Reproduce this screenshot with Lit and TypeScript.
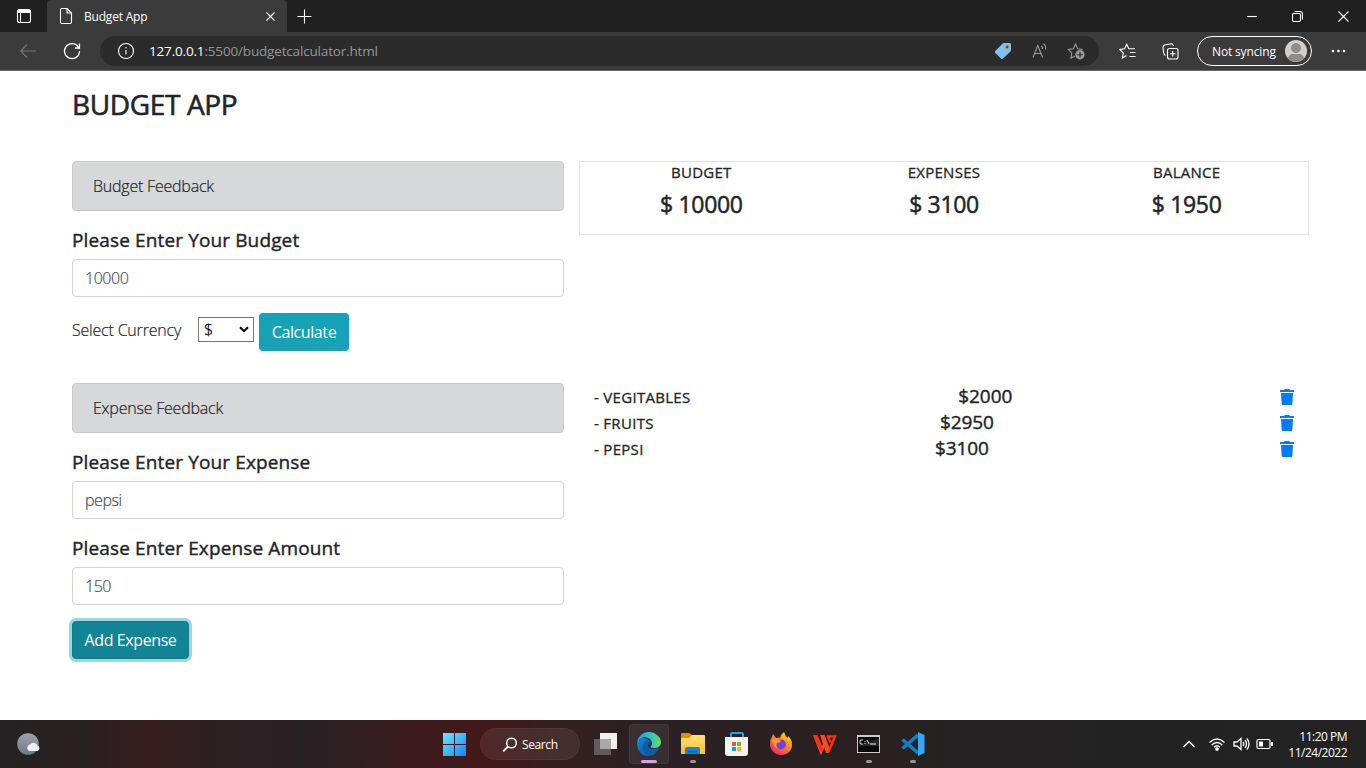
import { LitElement, html, css, svg } from "lit";
import { customElement, property } from "lit/decorators.js";

const trash = html`<svg class="trash" width="14" height="16" viewBox="0 0 14 16"><path fill="#007bff" d="M0 1h4l.8-1h4.4L10 1h4v2H0zM1 4h12l-.7 11a1.2 1.2 0 0 1-1.2 1H2.9a1.2 1.2 0 0 1-1.2-1z"/></svg>`;

@customElement("browser-chrome")
class BrowserChrome extends LitElement {
  static styles = css`
    :host { display: block; font-family: "Open Sans", sans-serif; color: #fff; }
    svg { display: block; flex: none; fill: none; stroke: #fff; stroke-width: 1.1; }
    .tabs { height: 32px; background: #202020; display: flex; align-items: center; }
    .menu { width: 47px; padding-left: 16px; box-sizing: border-box; }
    .tab { width: 240px; height: 32px; box-sizing: border-box; background: #3b3b3b; border-radius: 4px 4px 0 0; display: flex; align-items: center; padding: 0 12px 0 12px; }
    .name { font-size: 12px; margin-left: 11px; flex: 1; letter-spacing: -0.2px; }
    .plus { margin-left: 10px; }
    .win { margin-left: auto; display: flex; align-items: center; gap: 35px; padding-right: 17.5px; }
    .bar { height: 39px; box-sizing: border-box; background: #3b3b3b; border-bottom: 1px solid #6b6666; display: flex; align-items: center; padding-left: 20px; }
    .back { stroke: #777; }
    .reload { margin-left: 27px; stroke-width: 1.3; }
    .address { width: 999px; height: 30px; margin-left: 19px; border-radius: 15px; background: #2b2b2b; display: flex; align-items: center; padding: 0 13px 0 17px; box-sizing: border-box; }
    .url { margin-left: 14px; flex: 1; font-size: 13.5px; color: #969696; letter-spacing: -0.17px; }
    .host { color: #fff; }
    .tag { margin-right: 20px; stroke: none; }
    .read { margin-right: 19px; }
    .grey { stroke: #999; }
    .fav { margin-left: 20px; }
    .coll { margin-left: 26px; }
    .profile { margin-left: 18px; width: 115px; height: 30px; box-sizing: border-box; border: 1px solid #fff; border-radius: 15px; display: flex; align-items: center; justify-content: space-between; padding: 0 3px 0 14px; font-size: 12px; letter-spacing: -0.15px; white-space: nowrap; }
    .avatar { stroke: none; }
    .dots { margin-left: 19px; stroke: none; fill: #fff; }
  `;
  render() {
    return html`
      <div class="tabs">
        <div class="menu"><svg width="16" height="16" viewBox="0 0 16 16"><rect x="1.5" y="1.5" width="13" height="13" rx="2"/><path d="M1.5 2.5h13v2h-13z" fill="#fff"/><path d="M4.5 4v10.5"/></svg></div>
        <div class="tab">
          <svg width="14" height="16" viewBox="0 0 14 16"><path d="M1.5 2q0-1.5 1.5-1.5h5L12.5 5v9q0 1.500-1.500 1.500H3Q1.500 15.500 1.500 14zM8 .5V5h4.500"/></svg>
          <span class="name">Budget App</span>
          <svg width="9" height="9" viewBox="0 0 9 9"><path d="m.5.5 8 8m0-8-8 8"/></svg>
        </div>
        <svg class="plus" width="15" height="15" viewBox="0 0 15 15"><path d="M7.500.5v14M.5 7.500h14"/></svg>
        <div class="win">
          <svg width="10" height="10" viewBox="0 0 10 10"><path d="M0 5.500h10"/></svg>
          <svg width="11" height="11" viewBox="0 0 11 11"><rect x=".5" y="2.500" width="8" height="8" rx="1.500"/><path d="M2.500.5H8q2.500 0 2.500 2.500v5.500"/></svg>
          <svg width="11" height="11" viewBox="0 0 11 11"><path d="m.5.5 10 10m0-10-10 10"/></svg>
        </div>
      </div>
      <div class="bar">
        <svg class="back" width="16" height="14" viewBox="0 0 16 14"><path d="M7 .5.8 7 7 13.500M.8 7H16"/></svg>
        <svg class="reload" width="18" height="18" viewBox="0 0 18 18"><path d="M16.200 7A7.500 7.500 0 1 0 16.500 9M16.500 1.500V6h-4.500"/></svg>
        <div class="address">
          <svg width="18" height="18" viewBox="0 0 18 18"><circle cx="9" cy="9" r="7.500"/><path d="M9 8v4.500M9 5v1.500"/></svg>
          <span class="url"><span class="host">127.0.0.1</span>:5500/budgetcalculator.html</span>
          <svg class="tag" width="18" height="18" viewBox="0 0 18 18"><path fill="#82bfee" d="M10 1h5.500q1.500 0 1.500 1.500V8q0 1-.8 1.800L9 16.500q-1 1-2 0L1.200 11q-1-1 0-2L8.500 1.800Q9 1 10 1z"/><circle cx="13.200" cy="5" r="2" fill="#b98b12"/><circle cx="13.200" cy="5" r="1" fill="#4d3a08"/></svg>
          <svg class="read grey" width="16" height="16" viewBox="0 0 16 16"><path d="m1 14.500 4.800-12 4.800 12M2.700 10.500H9M9.500 3q1.200 1.200 1 3M11.500.8Q14.300 3 13.500 6.500"/></svg>
          <svg class="grey" width="19" height="18" viewBox="0 0 19 18"><path d="M8 14 4 16l.8-4.800L1.300 7.500l5-.8L8.500 2l2.200 4.700 5 .8"/><circle cx="13" cy="12.800" r="4.700" fill="#999" stroke="none"/><path d="M13 10v5.500m-2.800-2.700h5.600" stroke="#2b2b2b"/></svg>
        </div>
        <svg class="fav" width="17" height="16" viewBox="0 0 17 16"><path d="m7.500 12.500-4 2.500.8-5L.8 6.500l4.800-.7L7.700 1.300l2.100 4.400H16M11 9.500h5.500M10.500 13.500h6"/></svg>
        <svg class="coll" width="17" height="17" viewBox="0 0 17 17"><rect x="5.500" y="5.500" width="10.500" height="10.500" rx="2"/><path d="M10.750 8v5.500M8 10.750h5.500M3.500 12.500Q2 12 1.500 9L1 4.500Q1 2.500 2.500 2L9 .8q2 0 2.500 2"/></svg>
        <div class="profile"><span>Not syncing</span><svg class="avatar" width="24" height="24" viewBox="0 0 24 24"><circle cx="12" cy="12" r="11" fill="#d2cfcc"/><circle cx="12" cy="9" r="5" fill="#918c88"/><path d="M4 19.500Q5 15 8 15h8q3 0 4 4.500-8 7-16 0z" fill="#918c88"/></svg></div>
        <svg class="dots" width="15" height="4" viewBox="0 0 15 4"><circle cx="2" cy="2" r="1.300"/><circle cx="7.500" cy="2" r="1.300"/><circle cx="13" cy="2" r="1.300"/></svg>
      </div>`;
  }
}

@customElement("budget-page")
class BudgetPage extends LitElement {
  @property({ attribute: false }) expenses = [["- VEGITABLES", "$2000"], ["- FRUITS", "$2950"], ["- PEPSI", "$3100"]];
  static styles = css`
    :host { display: block; height: 649px; background: #fff; color: #212529; font: 300 16px/24px "Open Sans", sans-serif; -webkit-text-stroke: 0.2px; padding: 16px 57px 0 72px; box-sizing: border-box; }
    h1, h5 { margin: 0; font-weight: 400; white-space: nowrap; -webkit-text-stroke: 0.4px; }
    h1 { font-size: 28px; line-height: 34px; letter-spacing: -0.35px; -webkit-text-stroke: 0.6px; }
    .grid { margin-top: 40px; display: grid; grid-template-columns: 492px 730px; column-gap: 15px; row-gap: 32px; align-items: start; }
    .alert { height: 50px; box-sizing: border-box; border: 1px solid #c6c8ca; border-radius: 4px; background: #d6d8d9; padding: 12px 20px; letter-spacing: -0.22px; }
    h5 { font-size: 19px; line-height: 24px; margin: 17px 0 7px; letter-spacing: 0.13px; }
    .input { height: 38px; border: 1px solid #ced4da; border-radius: 4px; box-sizing: border-box; padding: 6px 12px; color: #495057; letter-spacing: -0.45px; }
    .currency { display: flex; margin-top: 16px; height: 38px; }
    .label { width: 126px; padding-top: 5px; letter-spacing: -0.2px; }
    .select { width: 56px; height: 25px; margin-top: 4px; box-sizing: border-box; border: 1px solid #767676; background: #fff; color: #000; display: flex; align-items: center; justify-content: space-between; padding: 0 4px 0 5px; -webkit-text-stroke: 0.3px; }
    .btn { width: 90px; height: 38px; margin-left: 5px; box-sizing: border-box; border-radius: 4px; background: #17a2b8; color: #fff; font-weight: 400; line-height: 38px; text-align: center; letter-spacing: -0.4px; -webkit-text-stroke: 0; }
    .focus { width: 117px; margin: 16px 0 0; background: #138496; border: 1px solid #117a8b; line-height: 36px; box-shadow: 0 0 0 3px rgba(58, 176, 195, .5); }
    .stats { height: 74px; box-sizing: border-box; border: 1px solid #dee2e6; display: grid; grid-template-columns: repeat(3, 1fr); text-align: center; font-weight: 400; -webkit-text-stroke: 0.3px; }
    .cap { font-size: 15px; line-height: 20px; letter-spacing: 0.25px; }
    .value { font-size: 23px; line-height: 29px; margin-top: 8px; letter-spacing: -0.35px; -webkit-text-stroke: 0.5px; }
    .list { padding: 0 15px; }
    .row { height: 26px; display: flex; justify-content: space-between; align-items: center; font-weight: 400; -webkit-text-stroke: 0.3px; }
    .item { font-size: 15px; padding-top: 2px; letter-spacing: 0.3px; }
    .amount { font-size: 19px; letter-spacing: -0.1px; -webkit-text-stroke: 0.4px; }
    .trash { margin-top: 2px; }
  `;
  render() {
    const stat = (a: string, b: string) => html`<div><div class="cap">${a}</div><div class="value">${b}</div></div>`;
    return html`
      <h1>BUDGET APP</h1>
      <div class="grid">
        <div>
          <div class="alert">Budget Feedback</div>
          <h5>Please Enter Your Budget</h5>
          <div class="input">10000</div>
          <div class="currency">
            <span class="label">Select Currency</span>
            <span class="select">$<svg width="10" height="7" viewBox="0 0 10 7"><path d="m1 1.200 4 4 4-4" fill="none" stroke="#000" stroke-width="2"/></svg></span>
            <span class="btn">Calculate</span>
          </div>
        </div>
        <div class="stats">${stat("BUDGET", "$ 10000")}${stat("EXPENSES", "$ 3100")}${stat("BALANCE", "$ 1950")}</div>
        <div>
          <div class="alert">Expense Feedback</div>
          <h5>Please Enter Your Expense</h5>
          <div class="input">pepsi</div>
          <h5>Please Enter Expense Amount</h5>
          <div class="input">150</div>
          <div class="btn focus">Add Expense</div>
        </div>
        <div class="list">${this.expenses.map(([n, a]) => html`<div class="row"><span class="item">${n}</span><span class="amount">${a}</span>${trash}</div>`)}</div>
      </div>`;
  }
}

@customElement("task-bar")
class TaskBar extends LitElement {
  static styles = css`
    :host { display: flex; height: 48px; box-sizing: border-box; align-items: center; color: #fff; font: 12px/16px "Open Sans", sans-serif; padding: 0 19px 0 16px;
      background: linear-gradient(90deg, #242222 0, #2a2021 90px, #381d1f 155px, #2d2023 200px, #2a2125 320px, #3a1c1f 400px, #441819 480px, #36201f 560px, #2b2023 640px, #2a2022 860px, #242222 960px, #232323 100%); }
    svg { display: block; }
    .apps { display: flex; align-items: center; margin-left: 401px; }
    .start { margin-right: 14px; }
    .search { width: 100px; height: 32px; border-radius: 16px; background: rgba(255,255,255,.07); box-shadow: inset 0 0 0 1px rgba(255,255,255,.04); display: flex; align-items: center; box-sizing: border-box; padding: 1px 0 0 22px; gap: 4px; letter-spacing: -0.4px; margin-right: 3px; }
    .app { width: 40px; height: 40px; margin: 0 2px; display: flex; flex-direction: column; align-items: center; border-radius: 4px; padding-top: 8px; box-sizing: border-box; }
    .active { background: rgba(255,255,255,.07); box-shadow: inset 0 0 0 1px rgba(255,255,255,.05); }
    .dot { width: 6px; height: 3px; border-radius: 2px; background: #9b9596; margin-top: 4px; }
    .active .dot { width: 16px; background: #dd9ce5; }
    .tray { margin-left: auto; display: flex; align-items: center; }
    .line { fill: none; stroke: #fff; stroke-width: 1.3; }
    .wifi { margin-left: 12px; }
    .sound { margin-left: 7px; }
    .battery { margin-left: 5px; }
    .clock { width: 64px; text-align: right; margin-left: 9px; padding-top: 1px; letter-spacing: -0.5px; white-space: nowrap; }
  `;
  render() {
    const app = (g: unknown, dot = false, active = false) => html`<div class="app ${active ? "active" : ""}"><svg width="24" height="24" viewBox="0 0 24 24">${g}</svg>${dot ? html`<i class="dot"></i>` : ""}</div>`;
    return html`
      <svg width="25" height="24" viewBox="0 0 25 24"><defs><linearGradient id="moon" x2="0" y2="1"><stop stop-color="#9ba4b0"/><stop offset="1" stop-color="#6e7884"/></linearGradient></defs><circle cx="12" cy="12" r="10.800" fill="url(#moon)"/><path fill="#edf0f4" d="M14 19a3.300 3.300 0 0 1 .2-6.500 4 4 0 0 1 7 .8A2.900 2.900 0 0 1 21 19z"/></svg>
      <div class="apps">
        <svg class="start" width="24" height="24" viewBox="0 0 24 24"><defs><linearGradient id="win" x2="1" y2="1"><stop stop-color="#70e6ff"/><stop offset="1" stop-color="#078df8"/></linearGradient></defs><path fill="url(#win)" d="M1 1h11v11H1zM13 1h11v11H13zM1 13h11v11H1zM13 13h11v11H13z"/></svg>
        <div class="search"><svg width="16" height="16" viewBox="0 0 16 16"><circle cx="9.500" cy="6" r="4.800" fill="none" stroke="#fff" stroke-width="1.500"/><path d="m6 9.500-4.800 4.800" stroke="#fff" stroke-width="1.800"/></svg>Search</div>
        ${app(svg`<path d="M7 1h17v16H7z" fill="#f1f1f1"/><path d="M1 7h17v16H1z" fill="#5e5c5d"/><path d="M7 7h11v10H7z" fill="#a9a8a8"/>`)}
        ${app(svg`<defs><linearGradient id="e1"><stop stop-color="#239ed6"/><stop offset=".6" stop-color="#35c7c5"/><stop offset="1" stop-color="#69e24c"/></linearGradient><linearGradient id="e2" x2="1" y2="1"><stop stop-color="#1688d4"/><stop offset="1" stop-color="#0b4d99"/></linearGradient></defs><path fill="url(#e2)" d="M0 11C1 4 8 5 13 9c-5 1-4 7 1 8 3 1 6 0 8-1-2 5-6 8-11 8C4 24 0 18 0 11z"/><path fill="#0b5cab" d="M7 11c2-4 6-3 7-1-5 2-3 7 1 7 3 0 5 0 7-1-3 6-7 8-11 7-5-2-7-8-4-12z"/><path fill="url(#e1)" d="M0 11C1 4 6 0 12 0s12 5 12 10c0 4-3 6-7 6-3 0-4-1-3-2 2-2 1-5-1-7C9 4 2 5 0 11z"/>`, true, true)}
        ${app(svg`<defs><linearGradient id="fo" x2="0" y2="1"><stop stop-color="#ffe078"/><stop offset="1" stop-color="#ffc12b"/></linearGradient></defs><path fill="#d99010" d="M0 2q0-1 1-1h7q1 0 3 2h6v6H0z"/><path fill="url(#fo)" d="M0 6h8l3-3h12q1 0 1 1v18H0z"/><path fill="#1685d5" d="M4 22v-5q0-2 2-2h11q2 0 2 2v5z"/><path fill="#0c61a8" d="M7 19h9v1.500H7z"/>`, true)}
        ${app(svg`<path d="M6 6V2q0-1 1-1h10q1 0 1 1v4" fill="none" stroke="#20a2e3" stroke-width="2"/><path fill="#f1f3f5" d="M0 5h23v16q0 3-3 3H3q-3 0-3-3z"/><path fill="#f25022" d="M7 10h4v4H7z"/><path fill="#7fba00" d="M12 10h4v4h-4z"/><path fill="#00a4ef" d="M7 15h4v4H7z"/><path fill="#ffb900" d="M12 15h4v4h-4z"/>`)}
        ${app(svg`<defs><linearGradient id="ff" x1="1" x2=".2" y2="1"><stop stop-color="#fff04a"/><stop offset=".45" stop-color="#ff8c22"/><stop offset="1" stop-color="#f4216b"/></linearGradient></defs><path fill="url(#ff)" d="M1 12Q1 7 3 5l1-3 3 4q3-1 4 0 1-4 4-6 1 4 4 6V4q4 3 4 9c0 6-5 10-11 10S1 18 1 12z"/><circle cx="12" cy="12.500" r="5" fill="#7541d7"/><path fill="#ff962d" d="M2 8q6-3 10 1-1 2-4 2-2 4 2 6-5-1-6-6z"/>`)}
        ${app(svg`<path d="M1.500 3.500 8 20l3.500-8" fill="none" stroke="#ff5a20" stroke-width="2.500"/><path d="M0 3h4.500l6 14-2.500 4z" fill="#ff2e1e"/><path d="M7 3h4.500L17 17l-1.500 4H13z" fill="#ff4a20"/><path d="m15.500 20 6.500-15.500h-7l2.500 6" fill="none" stroke="#f5301c" stroke-width="2.500"/>`)}
        ${app(svg`<path fill="#c9cccf" d="M0 3h23v18H0z"/><path fill="#090909" d="M1 5h21v15H1z"/><path fill="#333" d="M1 14 22 6v8z" opacity=".7"/><path d="M6 8H4q-1 0-1 1v2q0 1 1 1h2M8 9v1m0 1v1M10 8l2 4m1 0h6" fill="none" stroke="#eee"/>`, true)}
        ${app(svg`<path d="M1.500 7.500 17 21M1.500 16.500 17 3" stroke="#117fc8" stroke-width="3.500"/><path fill="#35a7f4" d="m17 0 6.500 3v18L17 24z"/>`, true)}
      </div>
      <div class="tray">
        <svg class="line" width="14" height="16" viewBox="0 0 14 16"><path d="m1.500 11 5.500-5.500 5.500 5.500"/></svg>
        <svg class="line wifi" width="18" height="16" viewBox="0 0 18 16"><path d="M1.500 6.500q7.500-7 15 0M3.700 9q5.300-5 10.600 0M6 11.300q3-3 6 0"/><circle cx="9" cy="13" r="1.200" fill="#fff"/></svg>
        <svg class="line sound" width="18" height="16" viewBox="0 0 18 16"><path d="M1 6h3l4-3.500v11L4 10H1zM10 6q1.500 2 0 4M12 4q3 4 0 8M14 2.500q4 5.500 0 11"/></svg>
        <svg class="battery" width="18" height="16" viewBox="0 0 18 16"><rect x="1" y="3.500" width="13" height="9" rx="1.500" fill="none" stroke="#fff" stroke-width="1.200"/><path d="M3 5.500h4v5H3zM15 6h2v4h-2z" fill="#fff"/></svg>
        <div class="clock">11:20 PM<br>11/24/2022</div>
      </div>`;
  }
}

@customElement("app-root")
class AppRoot extends LitElement {
  static styles = css`:host { display: block; width: 1366px; height: 768px; overflow: hidden; }`;
  render() {
    return html`<browser-chrome></browser-chrome><budget-page></budget-page><task-bar></task-bar>`;
  }
}
